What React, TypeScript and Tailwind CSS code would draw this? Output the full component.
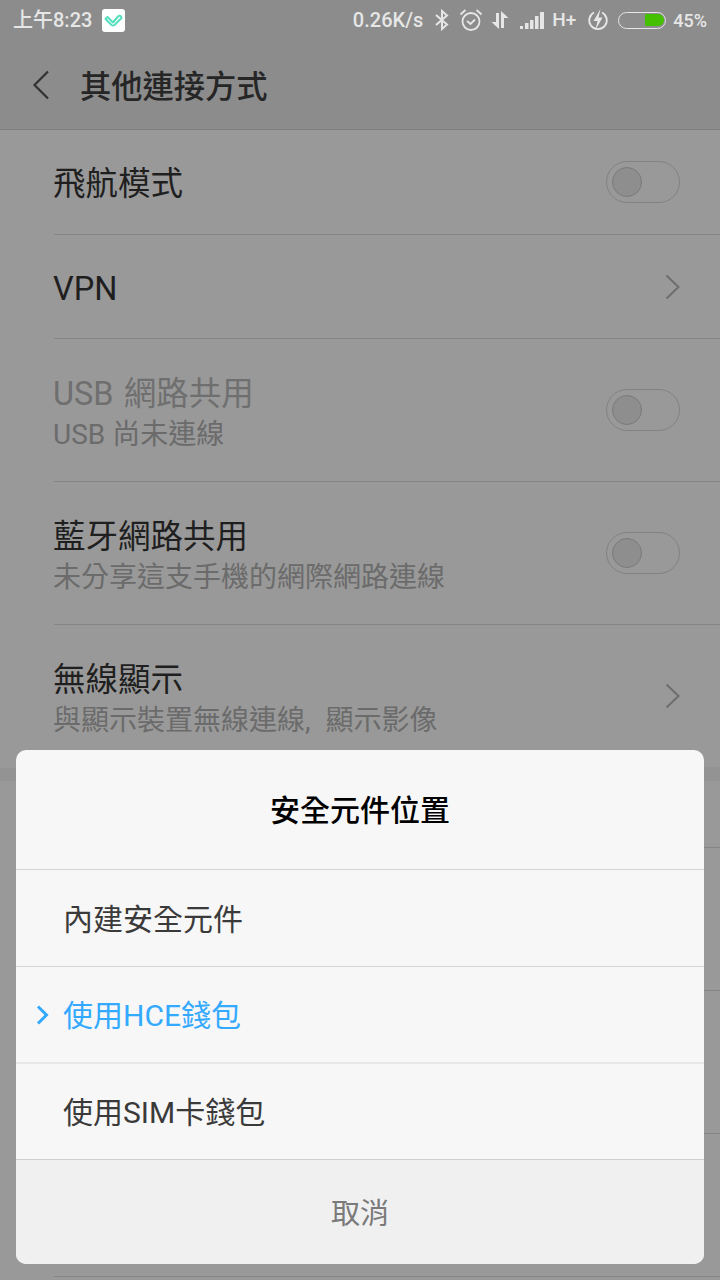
const FONT = "font-['Roboto','Noto_Sans_CJK_TC',sans-serif]";

function Toggle() {
  return (
    <div className="flex h-[42px] w-[74px] items-center rounded-full border border-[#828282] pl-[5px]">
      <div className="h-[30px] w-[30px] rounded-full border border-[#7a7a7a] bg-[#8e8e8e]" />
    </div>
  );
}

function Chevron() {
  return (
    <svg width="16" height="26" viewBox="0 0 16 26" fill="none" className="mr-[-1px]">
      <path d="M1.5 1.5 13.5 13 1.5 24.5" stroke="#6e6e6e" strokeWidth="2" />
    </svg>
  );
}

type RowProps = {
  title: string;
  sub?: string;
  height: number;
  disabled?: boolean;
  last?: boolean;
  right?: React.ReactNode;
};

function Row({ title, sub, height, disabled, last, right }: RowProps) {
  return (
    <div
      className={`ml-[54px] flex items-center justify-between border-b pr-10 ${last ? "border-[#939393]" : "border-[#858585]"}`}
      style={{ height }}
    >
      <div className="-ml-px pt-[4px]">
        <div className={`text-[32.5px] leading-[40px] [word-spacing:2px] ${disabled ? "text-[#6f6f6f]" : "text-[#1f1f1f]"}`}>{title}</div>
        {sub && (
          <div className={`mt-[3px] mb-[-2px] text-[28px] leading-[36px] text-[#6b6b6b] ${last ? "[word-spacing:8px]" : ""}`}>{sub}</div>
        )}
      </div>
      {right}
    </div>
  );
}

function StatusBar() {
  return (
    <div className="flex h-10 items-center justify-between bg-[#8c8c8c] pl-[13px] pr-[13px] text-[18px] font-medium text-[#e6e6e6]">
      <div className="flex items-center gap-[10px]">
        <span className="text-[20px]">上午8:23</span>
        <div className="flex h-[23px] w-[23px] items-center justify-center rounded-[3px] bg-white">
          <svg width="19" height="13" viewBox="0 0 19 13" fill="none">
            <path d="M1.500 5 3.500 3 9 8.500 14 2.500Q15.500 1 17 2.500L17.500 4 10.500 11Q9 12 7.500 11z" stroke="#55dfbe" strokeWidth="2" strokeLinejoin="round" />
          </svg>
        </div>
      </div>
      <div className="flex items-center">
        <span className="text-[20px]">0.26K/s</span>
        <svg width="16" height="22" viewBox="0 0 16 22" fill="none" className="ml-[11px]" stroke="#e6e6e6" strokeWidth="2">
          <path d="M2 6 13 15.500 8 20V2l5 4.500L2 16" />
        </svg>
        <svg width="24" height="24" viewBox="0 0 24 24" fill="none" className="ml-[9px]" stroke="#e6e6e6" strokeWidth="1.800">
          <circle cx="12" cy="13.500" r="8.500" />
          <path d="M8 13 11.500 16 16 11.500M1.500 6.500 6.500 2M22.500 6.500 17.500 2" />
        </svg>
        <svg width="20" height="20" viewBox="0 0 18 20" className="ml-[7px]" fill="#e6e6e6">
          <path d="M5 3h3v16L0.500 12H5zM10 1l7.500 7H13v10h-3z" />
        </svg>
        <svg width="26" height="18" viewBox="0 0 26 18" className="ml-[10px]" fill="#e6e6e6">
          <rect x="0" y="15" width="3" height="3" />
          <rect x="5" y="12" width="3.500" height="6" />
          <rect x="10" y="9" width="3.500" height="9" />
          <rect x="15" y="5" width="3.500" height="13" />
          <rect x="20" y="1" width="4" height="17" />
        </svg>
        <span className="ml-[6px] text-[19px]">H+</span>
        <svg width="22" height="24" viewBox="0 0 22 24" fill="none" className="ml-[11px]">
          <path d="M7 4.500a8.800 8.800 0 1 0 8 0" stroke="#e6e6e6" strokeWidth="1.800" />
          <path d="M13.500 1 6.500 13h4L8.500 22l7-12.500h-4z" fill="#e6e6e6" />
        </svg>
        <div className="ml-[9px] flex h-[17px] w-[48px] justify-end rounded-full border border-[#e6e6e6] p-[1.500px]">
          <div className="h-full w-[19px] rounded-r-full bg-[#45c000]" />
        </div>
        <span className="ml-[7px]">45%</span>
      </div>
    </div>
  );
}

type DialogItemProps = {
  label: string;
  height: number;
  selected?: boolean;
  afterSelected?: boolean;
};

function DialogItem({ label, height, selected, afterSelected }: DialogItemProps) {
  return (
    <div
      className={`relative flex items-center pl-[47px] pt-[2px] text-[30px] ${afterSelected ? "border-t-2 border-[#e8e8e8]" : "border-t border-[#d4d4d4]"} ${selected ? "text-[#33aaff]" : "text-[#3a3a3a]"}`}
      style={{ height }}
    >
      {selected && (
        <svg width="13" height="20" viewBox="0 0 13 20" fill="none" className="absolute left-[20px] top-[38px]">
          <path d="M2 1.500 10.500 10 2 18.500" stroke="#33aaff" strokeWidth="3" />
        </svg>
      )}
      {label}
    </div>
  );
}

export default function App() {
  return (
    <div className={`relative h-[1280px] w-[720px] overflow-hidden bg-[#999999] ${FONT}`}>
      <StatusBar />
      <div className="flex h-[90px] items-center border-b border-[#7d7d7d] bg-[#8c8c8c] pl-[32px]">
        <svg width="18" height="30" viewBox="0 0 18 30" fill="none">
          <path d="M16 1.500 2.500 15 16 28.500" stroke="#333333" strokeWidth="2.200" />
        </svg>
        <span className="ml-[30px] pt-[7px] text-[31.250px] font-medium text-[#262626]">其他連接方式</span>
      </div>
      <Row title="飛航模式" height={105} right={<Toggle />} />
      <Row title="VPN" height={104} right={<Chevron />} />
      <Row title="USB 網路共用" sub="USB 尚未連線" height={143} disabled right={<Toggle />} />
      <Row title="藍牙網路共用" sub="未分享這支手機的網際網路連線" height={143} right={<Toggle />} />
      <Row title="無線顯示" sub="與顯示裝置無線連線, 顯示影像" height={143} last right={<Chevron />} />
      <div className="h-[13px] bg-[#939393]" />
      <div className="ml-[54px] h-[67px] border-b border-[#858585]" />
      <div className="ml-[54px] h-[143px] border-b border-[#858585]" />
      <div className="ml-[54px] h-[143px] border-b border-[#858585]" />
      <div className="ml-[54px] h-[143px] border-b border-[#858585]" />

      <div className="absolute left-4 top-[750px] w-[688px] overflow-hidden rounded-[10px] bg-[#f7f7f7]">
        <div className="flex h-[119px] items-center justify-center pt-[2px] text-[30px] font-medium text-black">安全元件位置</div>
        <DialogItem label="內建安全元件" height={97} />
        <DialogItem label="使用HCE錢包" height={96} selected />
        <DialogItem label="使用SIM卡錢包" height={97} afterSelected />
        <div className="flex h-[105px] items-center justify-center border-t border-[#d0d0d0] bg-[#f0f0f0] pt-[5px] text-[29px] text-[#7a7a7a]">取消</div>
      </div>
    </div>
  );
}
